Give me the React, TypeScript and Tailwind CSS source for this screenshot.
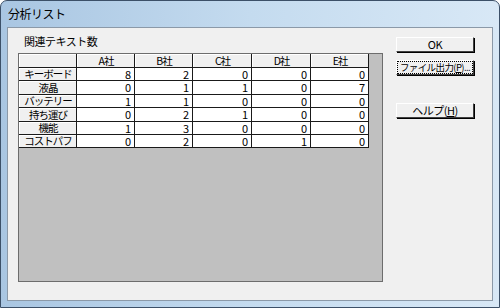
import React from 'react';

const FONT = { fontFamily: '"MS UI Gothic", "Noto Sans CJK JP", sans-serif' };

const companies = ['A社', 'B社', 'C社', 'D社', 'E社'];
const colWidths = ['w-[58px]', 'w-[58px]', 'w-[59px]', 'w-[59px]', 'w-[58px]'];

const rows: { label: string; values: number[] }[] = [
  { label: 'キーボード', values: [8, 2, 0, 0, 0] },
  { label: '液晶', values: [0, 1, 1, 0, 7] },
  { label: 'バッテリー', values: [1, 1, 0, 0, 0] },
  { label: '持ち運び', values: [0, 2, 1, 0, 0] },
  { label: '機能', values: [1, 3, 0, 0, 0] },
  { label: 'コストパフ', values: [0, 2, 0, 1, 0] },
];

const rowHeights = ['h-[14px]', 'h-[13px]', 'h-[14px]', 'h-[13px]', 'h-[14px]', 'h-[13px]', 'h-[13px]'];

function FixedCell({ w, h, children }: { w: string; h: string; children?: React.ReactNode }) {
  return (
    <div className={`${w} ${h} shrink-0 bg-[#f0f0f0] border-r border-b border-[#1a1a1a]`}>
      <div className="w-full h-full border-t border-l border-white flex items-center justify-center whitespace-nowrap text-[10.5px] leading-none tracking-[-1px] text-black">
        {children}
      </div>
    </div>
  );
}

function DataCell({ w, h, value }: { w: string; h: string; value: number }) {
  return (
    <div className={`${w} ${h} shrink-0 bg-white border-r border-b border-[#1a1a1a] flex items-center justify-end pr-[3px] text-[11px] leading-none text-black`}>
      {value}
    </div>
  );
}

function DlgButton({ children, focused, className }: { children: React.ReactNode; focused?: boolean; className?: string }) {
  return (
    <div
      className={`w-[78px] h-[15px] bg-[#f0f0f0] border border-t-white border-l-white border-r-[#404040] border-b-[#404040] shadow-[1px_1px_0_#000] flex items-center justify-center whitespace-nowrap text-[11px] leading-none text-black ${className ?? ''}`}
    >
      {focused ? (
        <span className="w-[74px] h-[11px] outline outline-1 outline-dotted outline-black flex items-center justify-center text-[9.5px] tracking-[-0.6px]">
          {children}
        </span>
      ) : (
        <span className="tracking-[-0.5px]">{children}</span>
      )}
    </div>
  );
}

export default function App() {
  return (
    <div style={FONT} className="w-[500px] h-[308px] rounded-t-[7px] border border-[#3c5068] bg-gradient-to-r from-[#a9c6e2] via-[#c4dbef] to-[#d8e8f6] flex flex-col overflow-hidden">
      {/* title bar */}
      <div className="h-[26px] shrink-0 flex items-center pl-[7px] text-[12px] text-black tracking-[-0.5px]">
        分析リスト
      </div>

      {/* client area */}
      <div className="mx-[6px] h-[274px] bg-[#f0f0f0] border border-[#8b99a8] flex">
        <div className="flex flex-col pl-[10px] pt-[8px]">
          <div className="h-[12px] pl-[6px] text-[11px] leading-none text-black tracking-[-0.5px]">関連テキスト数</div>

          <div className="mt-[5px] w-[365px] h-[229px] bg-[#c0c0c0] border border-[#6d6d6d] flex flex-col">
            {/* header */}
            <div className="flex">
              <FixedCell w="w-[58px]" h={rowHeights[0]} />
              {companies.map((c, i) => (
                <FixedCell key={c} w={colWidths[i]} h={rowHeights[0]}>{c}</FixedCell>
              ))}
            </div>
            {rows.map((r, ri) => (
              <div key={r.label} className="flex">
                <FixedCell w="w-[58px]" h={rowHeights[ri + 1]}>{r.label}</FixedCell>
                {r.values.map((v, i) => (
                  <DataCell key={i} w={colWidths[i]} h={rowHeights[ri + 1]} value={v} />
                ))}
              </div>
            ))}
          </div>
        </div>

        {/* buttons */}
        <div className="flex flex-col ml-[13px] pt-[9px]">
          <DlgButton>OK</DlgButton>
          <DlgButton focused className="mt-[8px]">
            ファイル出力(<span className="underline">P</span>)...
          </DlgButton>
          <DlgButton className="mt-[28px]">
            ヘルプ(<span className="underline">H</span>)
          </DlgButton>
        </div>
      </div>
      <div className="flex-1" />
    </div>
  );
}
